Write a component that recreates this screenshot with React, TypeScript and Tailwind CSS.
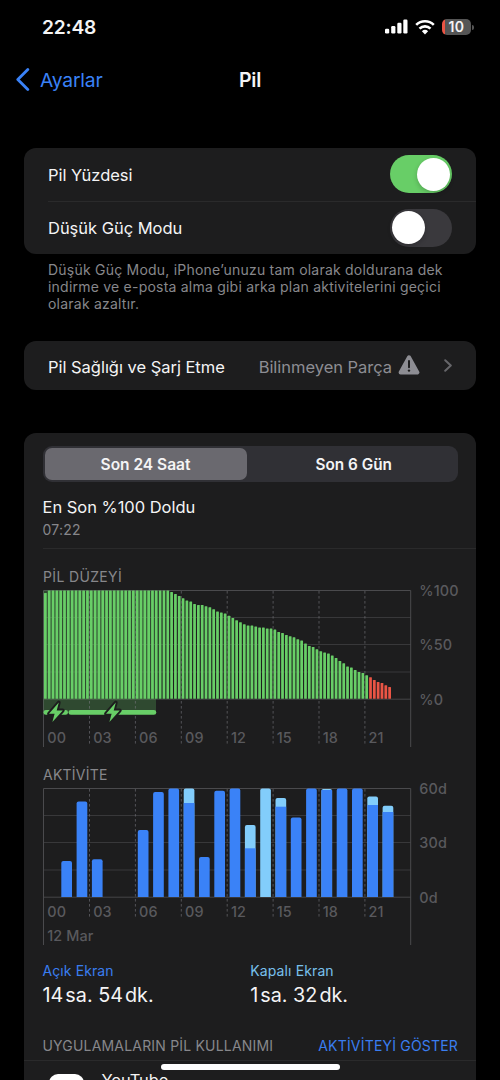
import React from "react";

const HOURS = ["00", "03", "06", "09", "12", "15", "18", "21"];

// Bar tops in pixels below the 100% line, one bar per 15 minutes.
const LEVEL_TOPS: number[] = [
  3,
  ...Array(32).fill(0.5),
  2, 4, 6, 8.3, 10.5, 11.5, 14, 15, 15, 16.2, 17.2, 19.3, 21.5, 22.5, 23.5, 25.7, 28, 30.3, 32.3, 34.3, 35.5, 35.5, 36.6,
  37.6, 37.6, 38.6, 38.6, 39.6, 42, 43, 45, 46.2, 47.2, 49.2, 50.6, 53.6, 56, 57, 59.2, 61.3, 62.6, 63.6, 65.6, 68, 71,
  73.3, 76.6, 77.6, 80, 82, 83, 85.3, 87.3, 90, 92, 93, 95.3, 97,
];

// [hour, screen-on pixels, screen-off pixels]
const ACTIVITY: [number, number, number][] = [
  [1, 36, 0], [2, 95.5, 0], [3, 37.7, 0], [6, 67, 0], [7, 105, 0], [8, 108.5, 0], [9, 94, 14.5], [10, 40, 0],
  [11, 106.3, 0], [12, 108.5, 0], [13, 48.7, 23.3], [14, 0, 108.5], [15, 90.3, 8.7], [16, 79.5, 0], [17, 108.5, 0],
  [18, 107, 1], [19, 108.5, 0], [20, 108.5, 0], [21, 92, 8.6], [22, 85, 6.2],
];

const STEP = 45.9;

function Grid({ bottom }: { bottom: number }) {
  return (
    <g stroke="#4a4a4d" fill="none">
      {[27.5, 54.5, 82].map((y) => (
        <path key={y} d={`M.5 ${y}H368`} stroke="#38383a" />
      ))}
      <path d="M.5 109.2H368" stroke="#454547" />
      <path d={`M.5 ${bottom}V.5H367.7V${bottom}`} />
    </g>
  );
}

function Dashes({ tick }: { tick: number }) {
  return (
    <g stroke="#77777d" strokeOpacity=".6" strokeDasharray="2.6 2.4">
      {[1, 2, 3, 4, 5, 6, 7].map((i) => (
        <path key={i} d={`M${0.6 + i * STEP} 1V${tick}`} />
      ))}
    </g>
  );
}

function HourLabels({ y }: { y: number }) {
  return (
    <g fill="#59595d" fontSize="14.4" fontWeight="500" letterSpacing="0.1">
      {HOURS.map((h, i) => (
        <text key={h} x={4.3 + i * STEP} y={y}>{h}</text>
      ))}
    </g>
  );
}

function AxisLabels({ labels }: { labels: string[] }) {
  return (
    <g fill="#59595d" fontSize="14.4" fontWeight="500" letterSpacing="0.15">
      {labels.map((l, i) => (
        <text key={l} x="376.3" y={6 + i * 54.3}>{l}</text>
      ))}
    </g>
  );
}

function Bolt({ x }: { x: number }) {
  return (
    <path
      transform={`translate(${x} 112.5)`}
      d="M9.8 0 0 11.2H5.6L3.4 19.4 13.8 7.9H7.7Z"
      fill="#68ce67"
      stroke="#1d1d1e"
      strokeWidth="3.8"
      strokeLinejoin="round"
      paintOrder="stroke"
    />
  );
}

function LevelChart() {
  return (
    <svg width="430" height="162" className="block overflow-visible">
      <Grid bottom={157} />
      <rect x="0.5" y="0.5" width="112.5" height="121.5" fill="#68ce67" fillOpacity=".25" />
      {LEVEL_TOPS.map((t, i) => (
        <rect key={i} x={1 + i * 3.825} y={t} width="2.75" height={108.8 - t} rx=".5" fill={i > 84 ? "#ea5545" : "#68ce67"} />
      ))}
      <Dashes tick={155} />
      <rect x="0.5" y="120" width="24.5" height="4.8" rx="2.4" fill="#68ce67" />
      <rect x="25.5" y="120" width="87.8" height="4.8" rx="2.4" fill="#68ce67" />
      <Bolt x={6} />
      <Bolt x={63} />
      <HourLabels y={153} />
      <AxisLabels labels={["%100", "%50", "%0"]} />
    </svg>
  );
}

function ActivityChart() {
  return (
    <svg width="430" height="160" className="block overflow-visible">
      <Grid bottom={157} />
      <Dashes tick={131} />
      {ACTIVITY.map(([h, on, off]) => {
        const x = 3 + h * 15.3;
        const top = 109 - on - off;
        return (
          <g key={h}>
            <path d={`M${x} 109V${top + 2}q0-2 2-2h6.7q2 0 2 2V109Z`} fill={off ? "#82cdfb" : "#3a82f7"} />
            {off > 0 && on > 0 && <rect x={x} y={109 - on} width="10.7" height={on} fill="#3a82f7" />}
          </g>
        );
      })}
      <HourLabels y={128.8} />
      <text x="4.3" y="153.4" fill="#59595d" fontSize="14.4" fontWeight="500" letterSpacing="0.1">12 Mar</text>
      <AxisLabels labels={["60d", "30d", "0d"]} />
    </svg>
  );
}

function Switch({ on }: { on?: boolean }) {
  return on ? (
    <div className="flex h-[38px] w-[62px] items-center justify-end rounded-full bg-[#68ce67] p-[2.5px]">
      <div className="size-[33px] rounded-full bg-white shadow-[0_2px_5px_rgba(0,0,0,0.2)]" />
    </div>
  ) : (
    <div className="flex h-[38px] w-[62px] items-center rounded-full bg-[#3a393d] p-[2px]">
      <div className="size-[33px] rounded-full bg-white shadow-[0_2px_5px_rgba(0,0,0,0.2)]" />
    </div>
  );
}

function StatusBar() {
  return (
    <div className="flex h-[54px] items-center justify-between pl-[42px] pr-[26px]">
      <span className="pt-px text-[19.2px] font-semibold tracking-[-0.2px]">22:48</span>
      <div className="flex items-center">
        <svg width="23" height="16" fill="#fff">
          <rect x="0" y="9.7" width="4.2" height="4.8" rx="1.2" />
          <rect x="6.2" y="7" width="4.2" height="7.5" rx="1.2" />
          <rect x="12.3" y="3.8" width="4.2" height="10.7" rx="1.2" />
          <rect x="18.3" y=".5" width="4.2" height="14" rx="1.2" />
        </svg>
        <svg className="ml-[7px]" width="20" height="15" viewBox="0 0 20 15" fill="none" stroke="#fff" strokeWidth="2.6">
          <path d="M1.2 4.9a12.6 12.6 0 0 1 17.6 0" />
          <path d="M4.5 8.6a7.8 7.8 0 0 1 11 0" />
          <path d="M10 14.4 6.9 11.2a4.5 4.5 0 0 1 6.2 0Z" fill="#fff" stroke="none" />
        </svg>
        <div className="ml-[7px] flex h-4 w-[29px] items-center justify-center overflow-hidden rounded-[5px] bg-[linear-gradient(90deg,#ea5545_3px,#555_3px)] text-[14px] font-semibold leading-none tracking-[0.3px]">
          10
        </div>
        <div className="ml-[1px] h-[5px] w-[2px] rounded-r-full bg-[#555]" />
      </div>
    </div>
  );
}

export default function App() {
  return (
    <div className="relative h-[1080px] w-[500px] overflow-hidden bg-black font-['Inter',sans-serif] text-[#f4f4f5]">
      <StatusBar />
      <header className="grid h-[52px] grid-cols-3 items-center px-4">
        <div className="flex items-center text-[#3a82f7]">
          <svg width="14" height="24" fill="none" stroke="currentColor" strokeWidth="2.8" strokeLinecap="round" strokeLinejoin="round">
            <path d="M11.8 1.5 1.8 11.5l10 10" />
          </svg>
          <span className="ml-[10px] text-[19.3px] tracking-[-0.2px]">Ayarlar</span>
        </div>
        <h1 className="pt-[1px] text-center text-[19.5px] font-semibold tracking-[-0.2px]">Pil</h1>
      </header>

      <main className="mt-[42px] px-6">
        <section className="rounded-[12px] bg-[#1d1d1e] pl-6">
          <div className="flex h-[53.5px] items-center justify-between border-b border-[#2a2a2b] pr-6">
            <span className="pt-[2px] text-[16.5px] tracking-[-0.03px]">Pil Yüzdesi</span>
            <Switch on />
          </div>
          <div className="flex h-[52.5px] items-center justify-between pr-6">
            <span className="pt-px text-[16.5px] tracking-[-0.03px]">Düşük Güç Modu</span>
            <Switch />
          </div>
        </section>
        <p className="h-[87px] whitespace-nowrap pl-6 pt-[7px] text-[14px] leading-[17px] tracking-[0.22px] text-[#87878b]">
          Düşük Güç Modu, iPhone’unuzu tam olarak doldurana dek
          <br />
          indirme ve e-posta alma gibi arka plan aktivitelerini geçici
          <br />
          olarak azaltır.
        </p>

        <section className="flex h-[49px] items-center whitespace-nowrap rounded-[12px] bg-[#1d1d1e] px-6 text-[16.5px] tracking-[-0.03px]">
          <span className="pt-[3px]">Pil Sağlığı ve Şarj Etme</span>
          <span className="ml-auto pt-[3px] text-[#8d8d93]">Bilinmeyen Parça</span>
          <svg className="mb-[1px] ml-[6px]" width="22" height="20" viewBox="0 0 22 20">
            <path d="M11 2.3 19.4 17.4H2.6Z" fill="#8d8d93" stroke="#8d8d93" strokeWidth="4" strokeLinejoin="round" />
            <path d="M11 6v6.2" stroke="#1d1d1e" strokeWidth="2" strokeLinecap="round" />
            <circle cx="11" cy="15.6" r="1.2" fill="#1d1d1e" />
          </svg>
          <svg className="ml-6" width="8" height="13" fill="none" stroke="#66666a" strokeWidth="2" strokeLinecap="round" strokeLinejoin="round">
            <path d="m1.2 1.2 5.6 5.3-5.6 5.3" />
          </svg>
        </section>

        <section className="mt-[43px] h-[660px] rounded-t-[12px] bg-[#1d1d1e] pl-[19px] pt-[13px]">
          <div className="-ml-[.5px] mr-[18px] grid h-9 grid-cols-[202px_1fr] rounded-[9px] bg-[#303035] p-[2px] text-[15.5px] font-semibold">
            <div className="flex items-center justify-center rounded-[7px] bg-[#6a696f] pt-px">Son 24 Saat</div>
            <div className="flex items-center justify-center pl-[5px] pt-[2px] text-[15.3px]">Son 6 Gün</div>
          </div>
          <div className="-ml-[.5px] h-[67px] border-b border-[#2a2a2b] pt-[13px]">
            <div className="text-[16.5px] leading-6 tracking-[-0.03px]">En Son %100 Doldu</div>
            <div className="text-[14px] leading-[21px] tracking-[0.2px] text-[#87878b]">07:22</div>
          </div>
          <h2 className="h-[41px] pt-[19px] text-[14px] leading-[18px] tracking-[0.35px] text-[#87878b]">PİL DÜZEYİ</h2>
          <LevelChart />
          <h2 className="h-[36px] pt-[14px] text-[14px] leading-[18px] tracking-[0.25px] text-[#87878b]">AKTİVİTE</h2>
          <ActivityChart />
          <div className="-ml-[.5px] grid grid-cols-2 pr-[18px] pt-[14px]">
            <div>
              <div className="text-[14px] leading-[18px] tracking-[0.1px] text-[#3a7df0]">Açık Ekran</div>
              <div className="pt-[2px] text-[19.8px] leading-[27px]">14<span className="ml-[2px]">sa. 54</span><span className="ml-[2px]">dk.</span></div>
            </div>
            <div>
              <div className="text-[14px] leading-[18px] tracking-[0.12px] text-[#78c0ec]">Kapalı Ekran</div>
              <div className="pt-[2px] text-[19.8px] leading-[27px]">1<span className="ml-[2px]">sa. 32</span><span className="ml-[2px]">dk.</span></div>
            </div>
          </div>
          <div className="-ml-[19px] mt-[26px] flex h-[26px] justify-between whitespace-nowrap border-b border-[#2a2a2b] pl-[18.5px] pr-[18px] text-[14px] leading-[22px] tracking-[0.19px]">
            <span className="text-[#87878b]">UYGULAMALARIN PİL KULLANIMI</span>
            <span className="text-[#3a7df0]">AKTİVİTEYİ GÖSTER</span>
          </div>
          <div className="flex pl-[5.5px] pt-[13px]">
            <div className="h-9 w-[35px] rounded-[9px] bg-white" />
            <span className="-mt-[6px] ml-[18px] text-[16.5px] leading-6 tracking-[-0.15px]">YouTube</span>
          </div>
        </section>
      </main>
      <div className="absolute bottom-[10px] left-[160.5px] h-[6px] w-[179px] rounded-full bg-white" />
    </div>
  );
}
